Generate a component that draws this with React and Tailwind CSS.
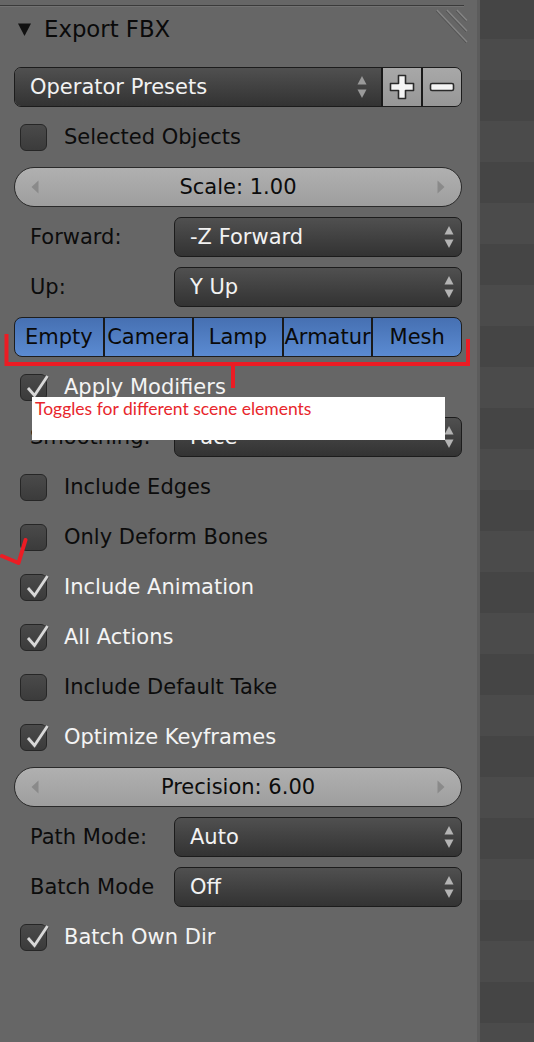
import React from "react";

const ui = "font-['DejaVu_Sans','Liberation_Sans',sans-serif]";

function UpDown({ color = "#b4b4b4" }) {
  return (
    <svg width="10" height="28" viewBox="0 0 10 28" className="shrink-0">
      <path d="M5 3 L9.5 11.5 L0.5 11.5 Z" fill={color} />
      <path d="M0.5 16.5 L9.5 16.5 L5 25 Z" fill={color} />
    </svg>
  );
}

function Dropdown({ value, className = "" }) {
  return (
    <div
      className={`h-[40px] flex items-center justify-between pl-[15px] pr-[7px] rounded-[7px] border border-[#1c1c1c] bg-gradient-to-b from-[#505050] to-[#333333] ${className}`}
    >
      <span className="text-[21px] text-[#f2f2f2] leading-none">{value}</span>
      <UpDown />
    </div>
  );
}

function Check() {
  return (
    <svg
      width="27"
      height="27"
      viewBox="0 0 27 27"
      className="absolute inset-0 overflow-visible"
    >
      <path d="M7 13 L13.5 20.5 L26.5 1" fill="none" stroke="#4a4a4a" strokeWidth="4.6" strokeLinejoin="round" />
      <path d="M7 13 L13.5 20.5 L26.5 1" fill="none" stroke="#d9d9d9" strokeWidth="2.8" />
    </svg>
  );
}

function CheckRow({ label, checked }) {
  return (
    <div className="h-[50px] flex items-center">
      <div className="relative ml-[6px] w-[27px] h-[27px] rounded-[6px] border border-[#262626] bg-gradient-to-b from-[#4a4a4a] to-[#3b3b3b]">
        {checked && <Check />}
      </div>
      <span
        className={`ml-[17px] text-[21px] leading-none ${checked ? "text-[#f4f4f4]" : "text-[#0c0c0c]"}`}
      >
        {label}
      </span>
    </div>
  );
}

function FieldRow({ label, value }) {
  return (
    <div className="h-[50px] flex items-center">
      <span className="w-[160px] pl-[16px] text-[21px] leading-none text-[#0c0c0c] whitespace-nowrap">
        {label}
      </span>
      <Dropdown value={value} className="flex-1" />
    </div>
  );
}

function Slider({ text }) {
  return (
    <div className="h-[50px] flex items-center">
      <div className="relative flex-1 h-[40px] rounded-full border border-[#2a2a2a] bg-gradient-to-b from-[#b0b0b0] to-[#9e9e9e] flex items-center justify-center">
        <svg width="8" height="14" viewBox="0 0 8 14" className="absolute left-[16px]">
          <path d="M7.5 0.5 L0.5 7 L7.5 13.5 Z" fill="#8a8a8a" />
        </svg>
        <span className="text-[21px] leading-none text-[#0c0c0c]">{text}</span>
        <svg width="8" height="14" viewBox="0 0 8 14" className="absolute right-[16px]">
          <path d="M0.5 0.5 L7.5 7 L0.5 13.5 Z" fill="#8a8a8a" />
        </svg>
      </div>
    </div>
  );
}

const toggles = ["Empty", "Camera", "Lamp", "Armatur", "Mesh"];

export default function App() {
  return (
    <div className={`w-[534px] h-[1042px] flex overflow-hidden ${ui}`}>
      <div className="relative w-[477px] h-full bg-[#666666]">
        <div className="h-[5px]" />
        <div className="w-[464px] h-px bg-[#3a3a3a]" />
        <div className="w-[464px] h-px bg-[#727272]" />

        {/* header */}
        <div className="h-[44px] flex items-center pl-[18px]">
          <svg width="13" height="13" viewBox="0 0 13 13">
            <path d="M0 0.5 L13 0.5 L6.5 13 Z" fill="#111" />
          </svg>
          <span className="ml-[13px] text-[22.8px] leading-none text-[#0a0a0a]">Export FBX</span>
        </div>
        <svg width="32" height="34" viewBox="0 0 32 34" className="absolute left-[436px] top-[9px]">
          <path d="M1 1 L31 33 M11 1 L31 22 M21 1 L31 11.5" stroke="#858585" strokeWidth="1.2" />
          <path d="M0 2 L30 34 M10 2 L30 23 M20 2 L30 12.5" stroke="#555" strokeWidth="1" />
        </svg>

        <div className="mt-[11px] pl-[14px] pr-[15px] flex flex-col">
          {/* presets */}
          <div className="h-[50px] flex items-center">
            <div className="flex-1 h-[40px] flex rounded-[7px] border border-[#1c1c1c] overflow-hidden">
              <div className="flex-1 flex items-center justify-between pl-[15px] pr-[14px] bg-gradient-to-b from-[#505050] to-[#333333]">
                <span className="text-[21px] leading-none text-[#f2f2f2]">Operator Presets</span>
                <UpDown color="#9a9a9a" />
              </div>
              <div className="w-[40px] flex items-center justify-center border-l-2 border-[#1a1a1a] bg-gradient-to-b from-[#a8a8a8] to-[#979797]">
                <svg width="26" height="26" viewBox="0 0 26 26">
                  <path
                    d="M9.5 1.5 H16.5 V9.5 H24.5 V16.5 H16.5 V24.5 H9.5 V16.5 H1.5 V9.5 H9.5 Z"
                    fill="#f4f4f4"
                    stroke="#2a2a2a"
                    strokeWidth="1.6"
                    strokeLinejoin="round"
                  />
                </svg>
              </div>
              <div className="w-[40px] flex items-center justify-center border-l-2 border-[#1a1a1a] bg-gradient-to-b from-[#a8a8a8] to-[#979797]">
                <svg width="26" height="10" viewBox="0 0 26 10">
                  <rect x="1.5" y="1.5" width="23" height="7" rx="1.5" fill="#f4f4f4" stroke="#2a2a2a" strokeWidth="1.6" />
                </svg>
              </div>
            </div>
          </div>

          <CheckRow label="Selected Objects" checked={false} />
          <Slider text="Scale: 1.00" />
          <FieldRow label="Forward:" value="-Z Forward" />
          <FieldRow label="Up:" value="Y Up" />

          {/* scene element toggles */}
          <div className="h-[50px] flex items-center">
            <div className="flex-1 h-[40px] flex rounded-[8px] border border-[#1e1e1e] overflow-hidden bg-gradient-to-b from-[#4670b2] to-[#5b8bd2]">
              {toggles.map((t, i) => (
                <div
                  key={t}
                  className={`flex-1 flex items-center justify-center overflow-hidden whitespace-nowrap text-[21px] leading-none text-[#0a0a0a] ${i > 0 ? "border-l-2 border-[#1a1a1a]" : ""}`}
                >
                  {t}
                </div>
              ))}
            </div>
          </div>

          <CheckRow label="Apply Modifiers" checked />
          <FieldRow label="Smoothing:" value="Face" />
          <CheckRow label="Include Edges" checked={false} />
          <CheckRow label="Only Deform Bones" checked={false} />
          <CheckRow label="Include Animation" checked />
          <CheckRow label="All Actions" checked />
          <CheckRow label="Include Default Take" checked={false} />
          <CheckRow label="Optimize Keyframes" checked />
          <Slider text="Precision: 6.00" />
          <FieldRow label="Path Mode:" value="Auto" />
          <FieldRow label="Batch Mode" value="Off" />
          <CheckRow label="Batch Own Dir" checked />
        </div>

        {/* annotations */}
        <svg width="477" height="64" viewBox="0 0 477 64" className="absolute left-0 top-[330px]">
          <path
            d="M6.5 4 L6.5 34 L468 34 L468 9 M233 34 L233 58"
            fill="none"
            stroke="#ec1c24"
            strokeWidth="4"
          />
        </svg>
        <div className="absolute left-[32px] top-[397px] w-[413px] h-[43px] bg-white pl-[3px] pt-[2px] font-['Lato',sans-serif] text-[17.5px] leading-[20px] text-[#e8262c]">
          Toggles for different scene elements
        </div>
        <svg width="30" height="30" viewBox="0 0 30 30" className="absolute left-0 top-[536px]">
          <path d="M25.5 4 L18.5 27 M2 20 L18.5 27" fill="none" stroke="#ec1c24" strokeWidth="4" strokeLinecap="round" />
        </svg>
      </div>
      <div className="w-[3px] h-full bg-[#5c5c5c]" />
      <div className="flex-1 h-full bg-[repeating-linear-gradient(180deg,#454545_0px,#454545_39px,#4b4b4b_39px,#4b4b4b_80px,#454545_80px,#454545_82px)]" />
    </div>
  );
}
